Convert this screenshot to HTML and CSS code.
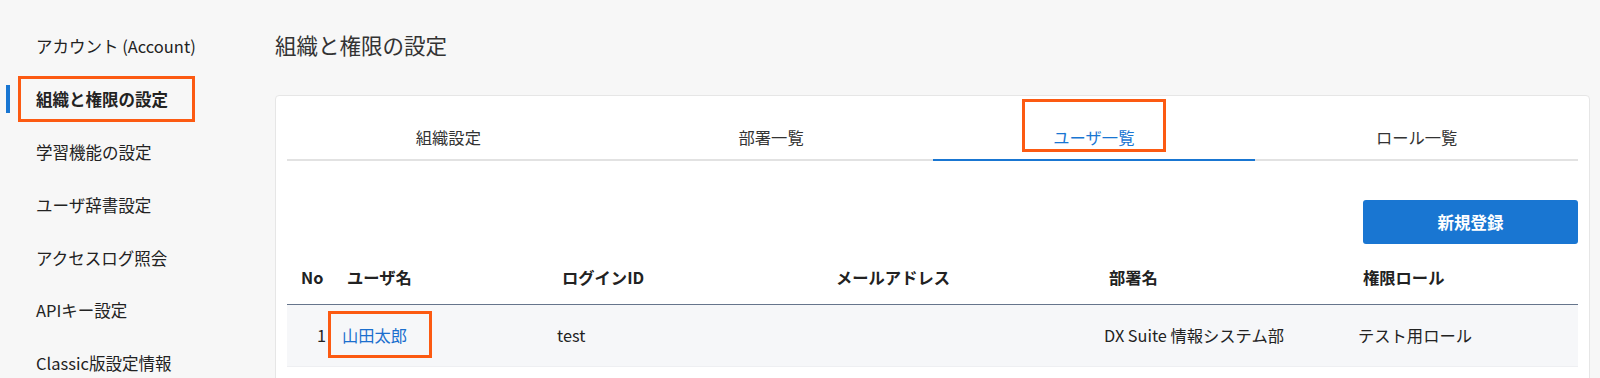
FILE: index.html
```html
<!DOCTYPE html>
<html lang="ja">
<head>
    <meta charset="UTF-8">
    <meta name="viewport" content="width=device-width, initial-scale=1.0">
    <title>組織と権限の設定</title>
    <link rel="stylesheet" href="styles.css">
</head>
<body>
    <nav class="sidebar">
        <a class="nav-item" href="#">アカウント (Account)</a>
        <a class="nav-item active" href="#"><span class="mark mark-nav">組織と権限の設定</span></a>
        <a class="nav-item" href="#">学習機能の設定</a>
        <a class="nav-item" href="#">ユーザ辞書設定</a>
        <a class="nav-item" href="#">アクセスログ照会</a>
        <a class="nav-item" href="#">APIキー設定</a>
        <a class="nav-item" href="#">Classic版設定情報</a>
    </nav>

    <main class="main">
        <h1 class="page-title">組織と権限の設定</h1>

        <div class="card">
            <div class="tabs">
                <div class="tab">組織設定</div>
                <div class="tab">部署一覧</div>
                <div class="tab active"><span class="mark mark-tab">ユーザ一覧</span></div>
                <div class="tab">ロール一覧</div>
            </div>

            <div class="toolbar">
                <button class="btn-primary">新規登録</button>
            </div>

            <table class="user-table">
                <colgroup>
                    <col style="width: 51px">
                    <col style="width: 215px">
                    <col style="width: 274px">
                    <col style="width: 273px">
                    <col style="width: 254px">
                    <col>
                </colgroup>
                <thead>
                    <tr>
                        <th class="col-no">No</th>
                        <th>ユーザ名</th>
                        <th>ログインID</th>
                        <th>メールアドレス</th>
                        <th>部署名</th>
                        <th>権限ロール</th>
                    </tr>
                </thead>
                <tbody>
                    <tr>
                        <td class="col-no">1</td>
                        <td><a class="user-link mark mark-user" href="#">山田太郎</a></td>
                        <td>test</td>
                        <td></td>
                        <td>DX Suite 情報システム部</td>
                        <td>テスト用ロール</td>
                    </tr>
                </tbody>
            </table>
        </div>
    </main>
</body>
</html>
```

FILE: styles.css
```css
body { margin: 0; padding: 0; background: #f7f7f7; color: #222; font-family: "Noto Sans CJK JP", "Noto Sans", sans-serif; display: flex; height: 378px; overflow: hidden; }

/* sidebar */
.sidebar { width: 275px; flex-shrink: 0; padding-top: 20px; }
.nav-item { display: flex; align-items: center; position: relative; height: 52.8px; padding-left: 36px; font-size: 16.5px; color: #222; text-decoration: none; }
.nav-item.active { font-weight: bold; }
.nav-item.active::before { content: ""; position: absolute; left: 6px; top: 12px; width: 4px; height: 28px; background: #1976d2; }

/* orange annotation boxes */
.mark { position: relative; }
.mark::after { content: ""; position: absolute; border: 3px solid #fc5a12; pointer-events: none; }
.mark-nav::after { left: -18px; right: -27px; top: -11px; bottom: -11px; }
.mark-tab::after { left: -31px; right: -32px; top: -26px; bottom: -3px; }
.mark-user::after { left: -14px; right: -25px; top: -12px; bottom: -11px; }

/* main */
.main { flex: 1; padding: 30px 10px 0 0; }
.page-title { margin: 0 0 35px; font-size: 21.5px; font-weight: normal; line-height: 30px; color: #333; }
.card { background: #fff; border: 1px solid #e6e6e6; border-radius: 4px; padding: 0 11px 20px; }

.tabs { display: flex; border-bottom: 2px solid #e2e2e2; }
.tab { flex: 1; text-align: center; padding: 29px 0 10px; margin-bottom: -2px; border-bottom: 2px solid transparent; font-size: 16.3px; line-height: 24px; color: #333; }
.tab.active { color: #1976d2; border-bottom-color: #1976d2; }

.toolbar { display: flex; justify-content: flex-end; padding-top: 39px; }
.btn-primary { width: 215px; height: 44px; border: none; border-radius: 3px; background: #1976d2; color: #fff; font-family: inherit; font-size: 16.5px; font-weight: bold; cursor: pointer; }

.user-table { width: 100%; border-collapse: collapse; table-layout: fixed; font-size: 16.3px; }
.user-table th { text-align: left; font-weight: bold; padding: 21px 0 15px 9px; line-height: 24px; border-bottom: 1px solid #66758c; color: #222; }
.user-table th.col-no { padding-left: 14px; }
.user-table td { padding: 18px 0 19px 4px; line-height: 24px; background: #f6f7f9; border-bottom: 1px solid #eeeff2; color: #222; }
.user-table td.col-no { text-align: right; padding-right: 12px; padding-left: 0; }
.user-link { color: #1b6fce; text-decoration: none; }
```
